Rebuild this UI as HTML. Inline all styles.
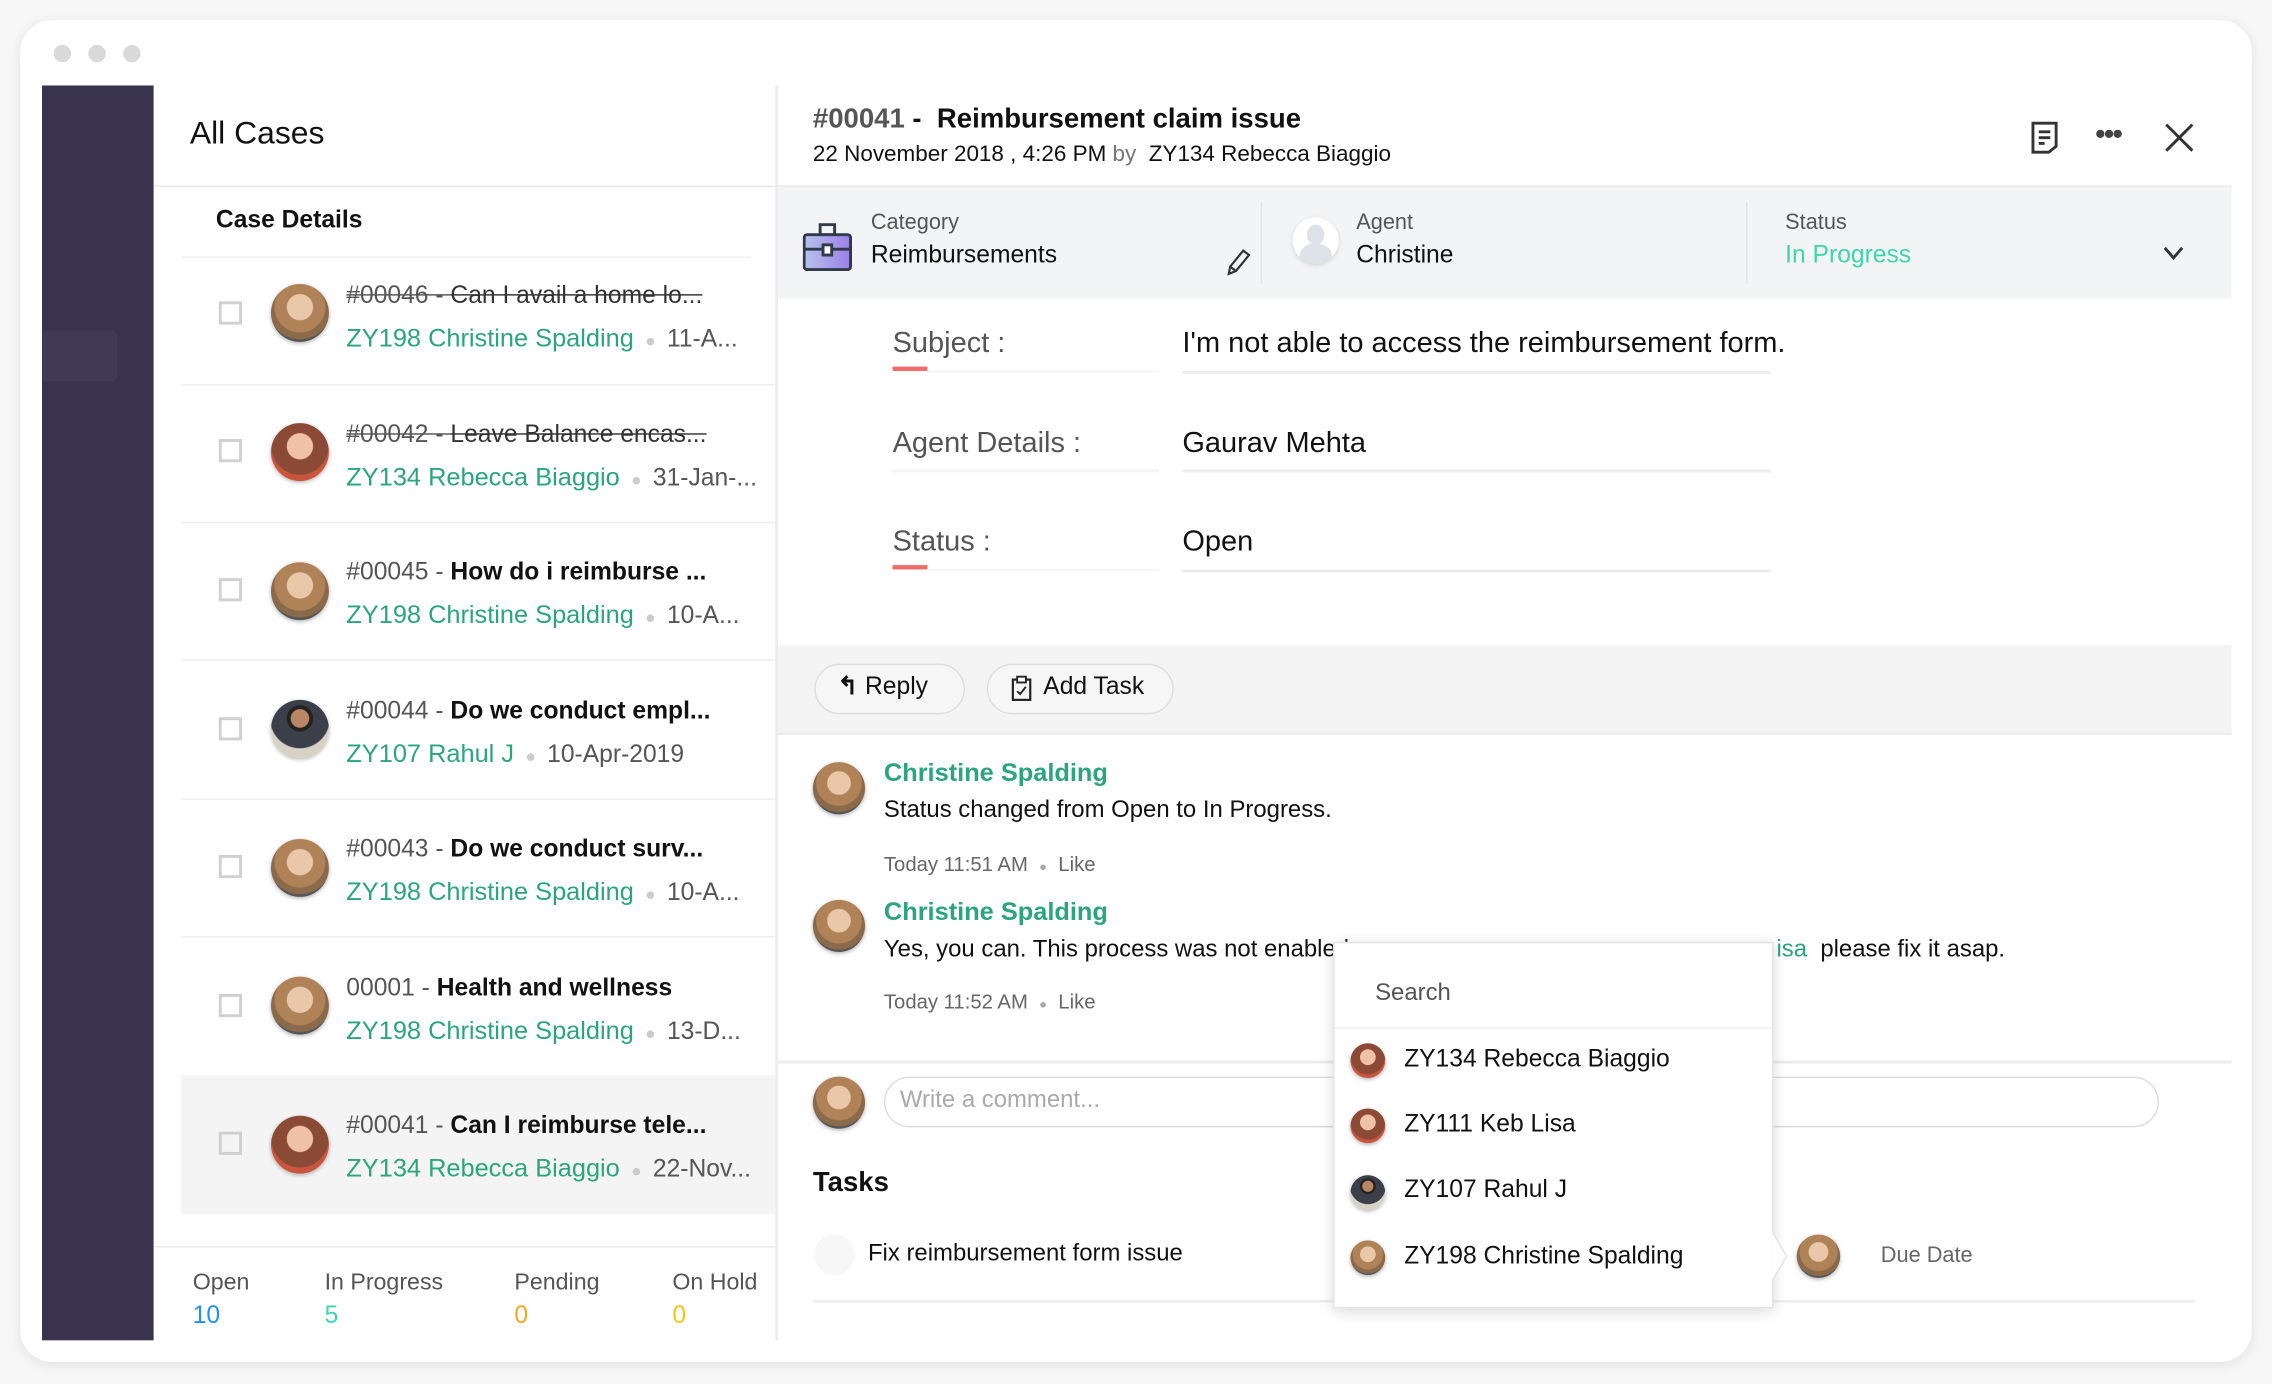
<!DOCTYPE html>
<html><head><meta charset="utf-8"><style>
*{box-sizing:border-box;margin:0;padding:0}
html,body{width:2272px;height:1384px;overflow:hidden;background:#f6f6f7}
body{font-family:"Liberation Sans",Arial,sans-serif;color:#222}
#s{position:absolute;left:0;top:0;width:1568px;height:955px;transform:scale(1.449);transform-origin:0 0}
.a{position:absolute;white-space:nowrap}
.card{left:14px;top:14px;width:1540px;height:926px;background:#fff;border-radius:22px;box-shadow:0 2px 8px rgba(0,0,0,.08)}
.dot{width:12px;height:12px;border-radius:50%;background:#d9d9d9;top:31px}
.av{border-radius:50%;background:radial-gradient(circle at 50% 40%,#e9c7a8 0 28%,#b08258 30% 55%,#8a6a4a 57% 70%,#555 72%);box-shadow:0 1px 3px rgba(0,0,0,.3)}
.av.r{background:radial-gradient(circle at 50% 40%,#efc2a8 0 28%,#8a4a35 30% 62%,#c9553f 64% 80%,#aa4444 82%)}
.av.m{background:radial-gradient(circle at 50% 32%,#b88765 0 18%,#222 20% 26%,#3a3f4a 28% 60%,#d8d2c4 62%)}
.cb{width:16px;height:16px;border:2px solid #d0d0d0}
.id{color:#555;font-size:17px}
.t{font-size:17px;color:#111}
.g{color:#2aa57d;font-size:17.5px}
.dd{color:#555;font-size:17px}
.sep{color:#ccc;font-size:12px}
.hl{height:1px;background:#eceef0}
.lbl{font-size:20px;color:#555}
.val{font-size:20px;color:#111}
</style></head><body><div id="s">
<div class="a card"></div>
<div class="a dot" style="left:37px"></div><div class="a dot" style="left:61px"></div><div class="a dot" style="left:85px"></div>
<div class="a" style="left:29px;top:59px;width:77px;height:866px;background:#3a334e"></div>
<div class="a" style="left:29px;top:228px;width:52px;height:35px;background:#403a55;border-radius:0 4px 4px 0"></div>

<!-- middle -->
<div class="a" style="left:131px;top:79px;font-size:22px;color:#111">All Cases</div>
<div class="a hl" style="left:106px;top:128px;width:429px;background:#e8e9ec"></div>
<div class="a" style="left:149px;top:142px;font-size:17px;font-weight:bold;color:#111">Case Details</div>
<div class="a hl" style="left:125px;top:177px;width:393px"></div>

<div class="a" style="left:125px;top:742px;width:410px;height:96px;background:#f4f4f4"></div>

<!-- rows -->
<div class="a cb" style="left:151px;top:208px"></div><div class="a av" style="left:187px;top:196px;width:40px;height:40px"></div>
<div class="a" style="left:239px;top:194px"><span class="id" style="text-decoration:line-through">#00046 - </span> <span class="t" style="text-decoration:line-through;color:#333">Can I avail a home lo...</span></div>
<div class="a" style="left:239px;top:223px"><span class="g">ZY198 Christine Spalding</span> <span class="sep">&nbsp;●&nbsp;</span> <span class="dd">11-A...</span></div>
<div class="a hl" style="left:125px;top:265px;width:410px"></div>

<div class="a cb" style="left:151px;top:303px"></div><div class="a av r" style="left:187px;top:292px;width:40px;height:40px"></div>
<div class="a" style="left:239px;top:290px"><span class="id" style="text-decoration:line-through">#00042 - </span> <span class="t" style="text-decoration:line-through;color:#333">Leave Balance encas...</span></div>
<div class="a" style="left:239px;top:319px"><span class="g">ZY134 Rebecca Biaggio</span> <span class="sep">&nbsp;●&nbsp;</span> <span class="dd">31-Jan-...</span></div>
<div class="a hl" style="left:125px;top:360px;width:410px"></div>

<div class="a cb" style="left:151px;top:399px"></div><div class="a av" style="left:187px;top:388px;width:40px;height:40px"></div>
<div class="a" style="left:239px;top:385px"><span class="id">#00045 - </span> <span class="t" style="font-weight:bold">How do i reimburse ...</span></div>
<div class="a" style="left:239px;top:414px"><span class="g">ZY198 Christine Spalding</span> <span class="sep">&nbsp;●&nbsp;</span> <span class="dd">10-A...</span></div>
<div class="a hl" style="left:125px;top:455px;width:410px"></div>

<div class="a cb" style="left:151px;top:495px"></div><div class="a av m" style="left:187px;top:483px;width:40px;height:40px"></div>
<div class="a" style="left:239px;top:481px"><span class="id">#00044 - </span> <span class="t" style="font-weight:bold">Do we conduct empl...</span></div>
<div class="a" style="left:239px;top:510px"><span class="g">ZY107 Rahul J</span> <span class="sep">&nbsp;●&nbsp;</span> <span class="dd">10-Apr-2019</span></div>
<div class="a hl" style="left:125px;top:551px;width:410px"></div>

<div class="a cb" style="left:151px;top:590px"></div><div class="a av" style="left:187px;top:579px;width:40px;height:40px"></div>
<div class="a" style="left:239px;top:576px"><span class="id">#00043 - </span> <span class="t" style="font-weight:bold">Do we conduct surv...</span></div>
<div class="a" style="left:239px;top:605px"><span class="g">ZY198 Christine Spalding</span> <span class="sep">&nbsp;●&nbsp;</span> <span class="dd">10-A...</span></div>
<div class="a hl" style="left:125px;top:646px;width:410px"></div>

<div class="a cb" style="left:151px;top:686px"></div><div class="a av" style="left:187px;top:674px;width:40px;height:40px"></div>
<div class="a" style="left:239px;top:672px"><span class="id">00001 - </span> <span class="t" style="font-weight:bold">Health and wellness</span></div>
<div class="a" style="left:239px;top:701px"><span class="g">ZY198 Christine Spalding</span> <span class="sep">&nbsp;●&nbsp;</span> <span class="dd">13-D...</span></div>

<div class="a cb" style="left:151px;top:781px"></div><div class="a av r" style="left:187px;top:770px;width:40px;height:40px"></div>
<div class="a" style="left:239px;top:767px"><span class="id">#00041 - </span> <span class="t" style="font-weight:bold">Can I reimburse tele...</span></div>
<div class="a" style="left:239px;top:796px"><span class="g">ZY134 Rebecca Biaggio</span> <span class="sep">&nbsp;●&nbsp;</span> <span class="dd">22-Nov...</span></div>

<div class="a hl" style="left:106px;top:860px;width:429px;background:#e8e9ec"></div>
<div class="a" style="left:133px;top:877px;font-size:16px;color:#555">Open</div><div class="a" style="left:133px;top:898px;font-size:17px;color:#1e90ff">10</div>
<div class="a" style="left:224px;top:877px;font-size:16px;color:#555">In Progress</div><div class="a" style="left:224px;top:898px;font-size:17px;color:#3dd6b0">5</div>
<div class="a" style="left:355px;top:877px;font-size:16px;color:#555">Pending</div><div class="a" style="left:355px;top:898px;font-size:17px;color:#f5a623">0</div>
<div class="a" style="left:464px;top:877px;font-size:16px;color:#555">On Hold</div><div class="a" style="left:464px;top:898px;font-size:17px;color:#f5c518">0</div>

<!-- right panel -->
<div class="a" style="left:535px;top:59px;width:2px;height:866px;background:#ececee"></div>
<div class="a" style="left:561px;top:72px;font-size:19px;font-weight:bold;color:#111"><span style="color:#555">#00041</span> - &nbsp;Reimbursement claim issue</div>
<div class="a" style="left:561px;top:98px;font-size:15.5px;color:#111">22 November 2018 , 4:26 PM <span style="color:#777">by</span> &nbsp;ZY134 Rebecca Biaggio</div>
<svg class="a" style="left:1400px;top:83px" width="22" height="24" viewBox="0 0 22 24"><path d="M3 2h16v16l-5 4H3z" fill="none" stroke="#333" stroke-width="2"/><path d="M7 8h8M7 12h8M7 16h4" stroke="#333" stroke-width="2"/></svg>
<div class="a" style="left:1446px;top:82px;font-size:20px;font-weight:bold;color:#444;letter-spacing:-1px">•••</div>
<svg class="a" style="left:1493px;top:84px" width="22" height="22"><path d="M2 2L20 20M20 2L2 20" stroke="#333" stroke-width="2"/></svg>

<div class="a" style="left:537px;top:128px;width:1003px;height:78px;background:#f3f4f6;border-top:1px solid #e6e7ea"></div>
<div class="a" style="left:870px;top:140px;width:1px;height:56px;background:#e3e4e7"></div>
<div class="a" style="left:1205px;top:140px;width:1px;height:56px;background:#e3e4e7"></div>
<svg class="a" style="left:554px;top:154px" width="34" height="34" viewBox="0 0 34 34"><defs><linearGradient id="bg" x1="0" x2="1"><stop offset="0" stop-color="#b8c2ee"/><stop offset="1" stop-color="#9b7fe8"/></linearGradient></defs><rect x="12" y="1" width="10" height="7" fill="none" stroke="#2f3a4a" stroke-width="2"/><rect x="1" y="8" width="32" height="24" rx="2" fill="url(#bg)" stroke="#2f3a4a" stroke-width="2"/><path d="M1 18h32" stroke="#2f3a4a" stroke-width="2"/><rect x="14" y="15" width="6" height="7" fill="#fff" stroke="#2f3a4a" stroke-width="2"/></svg>
<div class="a" style="left:601px;top:145px;font-size:15px;color:#555">Category</div>
<div class="a" style="left:601px;top:166px;font-size:17px;color:#111">Reimbursements</div>
<svg class="a" style="left:845px;top:171px" width="18" height="20" viewBox="0 0 18 20"><path d="M3 18l1-5L13 2l4 3-9 11z M4 13l4 3" fill="none" stroke="#333" stroke-width="1.5"/></svg>
<div class="a" style="left:892px;top:150px;width:32px;height:32px;border-radius:50%;background:#fff;box-shadow:0 1px 3px rgba(0,0,0,.15);overflow:hidden"><div style="position:absolute;left:10px;top:5px;width:12px;height:14px;border-radius:50%;background:#dde1e8"></div><div style="position:absolute;left:5px;top:18px;width:22px;height:16px;border-radius:50% 50% 0 0;background:#dde1e8"></div></div>
<div class="a" style="left:936px;top:145px;font-size:15px;color:#555">Agent</div>
<div class="a" style="left:936px;top:166px;font-size:17px;color:#111">Christine</div>
<div class="a" style="left:1232px;top:145px;font-size:15px;color:#555">Status</div>
<div class="a" style="left:1232px;top:166px;font-size:17px;color:#3dd6a8">In Progress</div>
<svg class="a" style="left:1492px;top:169px" width="16" height="12"><path d="M2 2l6 7 6-7" fill="none" stroke="#333" stroke-width="2"/></svg>

<div class="a lbl" style="left:616px;top:226px">Subject :</div>
<div class="a val" style="left:816px;top:226px">I'm not able to access the reimbursement form.</div>
<div class="a" style="left:616px;top:253px;width:24px;height:3px;background:#f06a6a"></div>
<div class="a hl" style="left:640px;top:256px;width:160px;background:#f3f3f3"></div>
<div class="a hl" style="left:816px;top:256px;width:406px;height:2px;background:#ececec"></div>
<div class="a lbl" style="left:616px;top:295px">Agent Details :</div>
<div class="a val" style="left:816px;top:295px">Gaurav Mehta</div>
<div class="a hl" style="left:616px;top:324px;width:184px;height:2px;background:#f3f3f3"></div>
<div class="a hl" style="left:816px;top:324px;width:406px;height:2px;background:#ececec"></div>
<div class="a lbl" style="left:616px;top:363px">Status :</div>
<div class="a val" style="left:816px;top:363px">Open</div>
<div class="a" style="left:616px;top:390px;width:24px;height:3px;background:#f06a6a"></div>
<div class="a hl" style="left:640px;top:393px;width:160px;background:#f3f3f3"></div>
<div class="a hl" style="left:816px;top:393px;width:406px;height:2px;background:#ececec"></div>

<div class="a" style="left:537px;top:445px;width:1003px;height:62px;background:#f4f4f4;border-bottom:1px solid #e6e6e6"></div>
<div class="a" style="left:562px;top:458px;width:104px;height:35px;border:1px solid #dedede;border-radius:18px;background:#f6f6f6"></div>
<div class="a" style="left:578px;top:464px;font-size:17px;color:#111"><span style="font-weight:bold">↰</span> Reply</div>
<div class="a" style="left:681px;top:458px;width:129px;height:35px;border:1px solid #dedede;border-radius:18px;background:#f6f6f6"></div>
<svg class="a" style="left:698px;top:466px" width="14" height="18" viewBox="0 0 14 18"><rect x="1" y="3" width="12" height="14" fill="none" stroke="#222" stroke-width="1.5"/><rect x="4" y="1" width="6" height="4" fill="#fff" stroke="#222" stroke-width="1.3"/><path d="M4 11l2 2 4-5" fill="none" stroke="#222" stroke-width="1.3"/></svg>
<div class="a" style="left:720px;top:464px;font-size:17px;color:#111">Add Task</div>

<div class="a av" style="left:561px;top:526px;width:36px;height:36px"></div>
<div class="a" style="left:610px;top:523px;font-size:17.5px;font-weight:bold;color:#2aa57d">Christine Spalding</div>
<div class="a" style="left:610px;top:550px;font-size:16.5px;color:#111">Status changed from Open to In Progress.</div>
<div class="a" style="left:610px;top:588px;font-size:14px;color:#666">Today 11:51 AM &nbsp;<span style="color:#aaa;font-size:9px">●</span>&nbsp; Like</div>
<div class="a av" style="left:561px;top:621px;width:36px;height:36px"></div>
<div class="a" style="left:610px;top:619px;font-size:17.5px;font-weight:bold;color:#2aa57d">Christine Spalding</div>
<div class="a" style="left:610px;top:646px;font-size:16.5px;color:#111">Yes, you can. This process was not enabled</div>
<div class="a" style="left:1226px;top:646px;font-size:16.5px;color:#111"><span style="color:#2aa57d">isa</span> &nbsp;please fix it asap.</div>
<div class="a" style="left:610px;top:683px;font-size:14px;color:#666">Today 11:52 AM &nbsp;<span style="color:#aaa;font-size:9px">●</span>&nbsp; Like</div>

<div class="a hl" style="left:537px;top:732px;width:1003px;height:2px;background:#ececec"></div>
<div class="a av" style="left:561px;top:743px;width:36px;height:36px"></div>
<div class="a" style="left:610px;top:743px;width:880px;height:35px;border:1px solid #dcdcdc;border-radius:18px"></div>
<div class="a" style="left:621px;top:750px;font-size:16.5px;color:#aaa">Write a comment...</div>
<div class="a" style="left:561px;top:806px;font-size:19px;font-weight:bold;color:#111">Tasks</div>
<div class="a" style="left:562px;top:852px;width:28px;height:28px;border-radius:50%;background:#f7f7f7"></div>
<div class="a" style="left:599px;top:856px;font-size:16.5px;color:#111">Fix reimbursement form issue</div>
<div class="a hl" style="left:561px;top:897px;width:954px;height:2px;background:#eeeeee"></div>
<div class="a av" style="left:1240px;top:852px;width:30px;height:30px"></div>
<div class="a" style="left:1298px;top:858px;font-size:15px;color:#666">Due Date</div>

<!-- dropdown -->
<div class="a" style="left:920px;top:650px;width:304px;height:253px;background:#fff;border:1px solid #e3e3e3;box-shadow:0 2px 10px rgba(0,0,0,.15)"></div>
<svg class="a" style="left:1223px;top:850px" width="12" height="34"><path d="M0 0L10 17L0 34" fill="#fff" stroke="#e3e3e3"/></svg>
<div class="a" style="left:949px;top:676px;font-size:16.5px;color:#555">Search</div>
<div class="a hl" style="left:921px;top:709px;width:302px"></div>
<div class="a av r" style="left:932px;top:720px;width:24px;height:24px"></div>
<div class="a" style="left:969px;top:721px;font-size:17px;color:#111">ZY134 Rebecca Biaggio</div>
<div class="a av r" style="left:932px;top:765px;width:24px;height:24px"></div>
<div class="a" style="left:969px;top:766px;font-size:17px;color:#111">ZY111 Keb Lisa</div>
<div class="a av m" style="left:932px;top:811px;width:24px;height:24px"></div>
<div class="a" style="left:969px;top:811px;font-size:17px;color:#111">ZY107 Rahul J</div>
<div class="a av" style="left:932px;top:856px;width:24px;height:24px"></div>
<div class="a" style="left:969px;top:857px;font-size:17px;color:#111">ZY198 Christine Spalding</div>
</div></body></html>
